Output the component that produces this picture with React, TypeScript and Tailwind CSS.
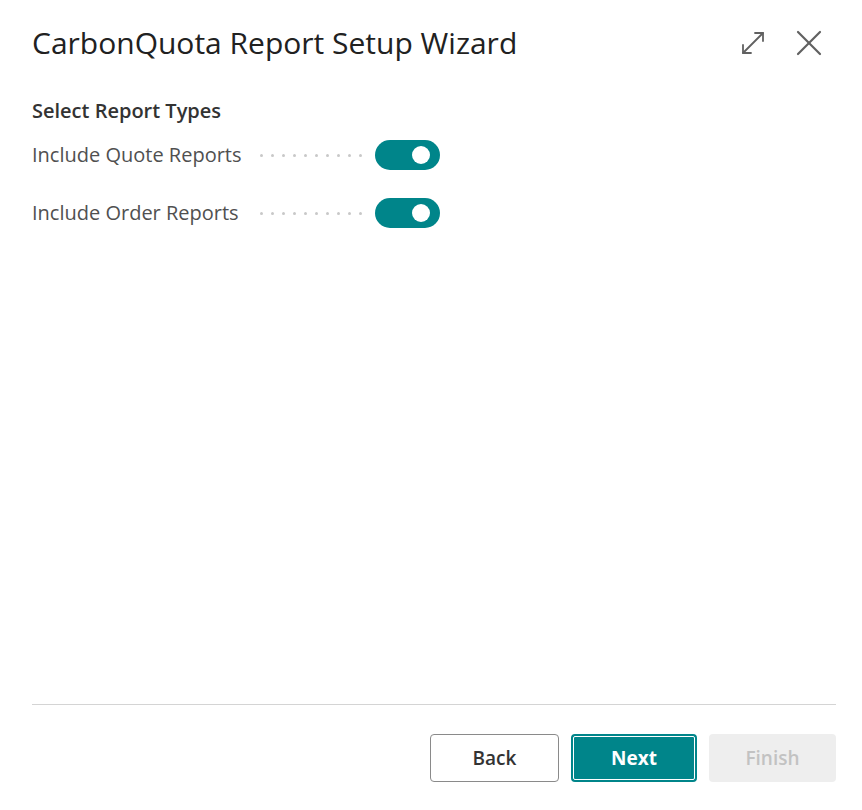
import React from "react";

function Toggle() {
  return (
    <div className="relative w-[65px] h-[30px] rounded-full bg-[#00858a] shrink-0">
      <div className="absolute right-[10px] top-[6px] w-[18px] h-[18px] rounded-full bg-white" />
    </div>
  );
}

function Row({ label }: { label: string }) {
  return (
    <div className="flex items-center h-[30px]">
      <span className="text-[20px] text-[#505050] leading-none">{label}</span>
      <div className="flex-1 flex justify-end gap-[8px] pr-[13px] pl-[14px]">
        {Array.from({ length: 10 }).map((_, i) => (
          <span key={i} className="w-[3px] h-[3px] rounded-full bg-[#c8c8c8]" />
        ))}
      </div>
      <Toggle />
    </div>
  );
}

export default function App() {
  return (
    <div
      className="w-[862px] h-[810px] bg-white flex flex-col pl-[32px] pr-[26px]"
      style={{ fontFamily: '"Open Sans", "Noto Sans", sans-serif' }}
    >
      <div className="flex items-center justify-between pt-[22px] h-[64px]">
        <h1 className="text-[30px] text-[#212121] leading-none">
          CarbonQuota Report Setup Wizard
        </h1>
        <div className="flex items-center gap-[30px] pr-[14px]">
          <svg width="26" height="26" viewBox="0 0 26 26" fill="none" stroke="#616161" strokeWidth="1.8" strokeLinecap="round" strokeLinejoin="round">
            <path d="M3 23 L23 3" />
            <path d="M15 3 H23 V11" />
            <path d="M3 15 V23 H11" />
          </svg>
          <svg width="26" height="26" viewBox="0 0 26 26" fill="none" stroke="#616161" strokeWidth="2.2" strokeLinecap="round">
            <path d="M2 2 L24 24" />
            <path d="M24 2 L2 24" />
          </svg>
        </div>
      </div>
      <div className="pt-[37px] w-[408px]">
        <div className="text-[20px] font-semibold text-[#333] leading-none mb-[19px]">Select Report Types</div>
        <div className="flex flex-col gap-[28px]">
          <Row label="Include Quote Reports" />
          <Row label="Include Order Reports" />
        </div>
      </div>
      <div className="flex-1" />
      <div className="border-t border-[#d4d4d4]" />
      <div className="flex justify-end gap-[12px] pt-[29px] pb-[28px]">
        <button className="w-[129px] h-[48px] rounded-[4px] border border-[#8a8a8a] bg-white text-[19px] font-semibold text-[#333]">
          Back
        </button>
        <button className="w-[126px] h-[48px] rounded-[4px] border-2 border-[#00858a] bg-[#00858a] p-0">
          <div className="w-full h-full border border-white rounded-[2px] flex items-center justify-center text-[19px] font-bold text-white">
            Next
          </div>
        </button>
        <button className="w-[127px] h-[48px] rounded-[4px] bg-[#eeeeee] text-[19px] font-semibold text-[#c2c2c2]">
          Finish
        </button>
      </div>
    </div>
  );
}
